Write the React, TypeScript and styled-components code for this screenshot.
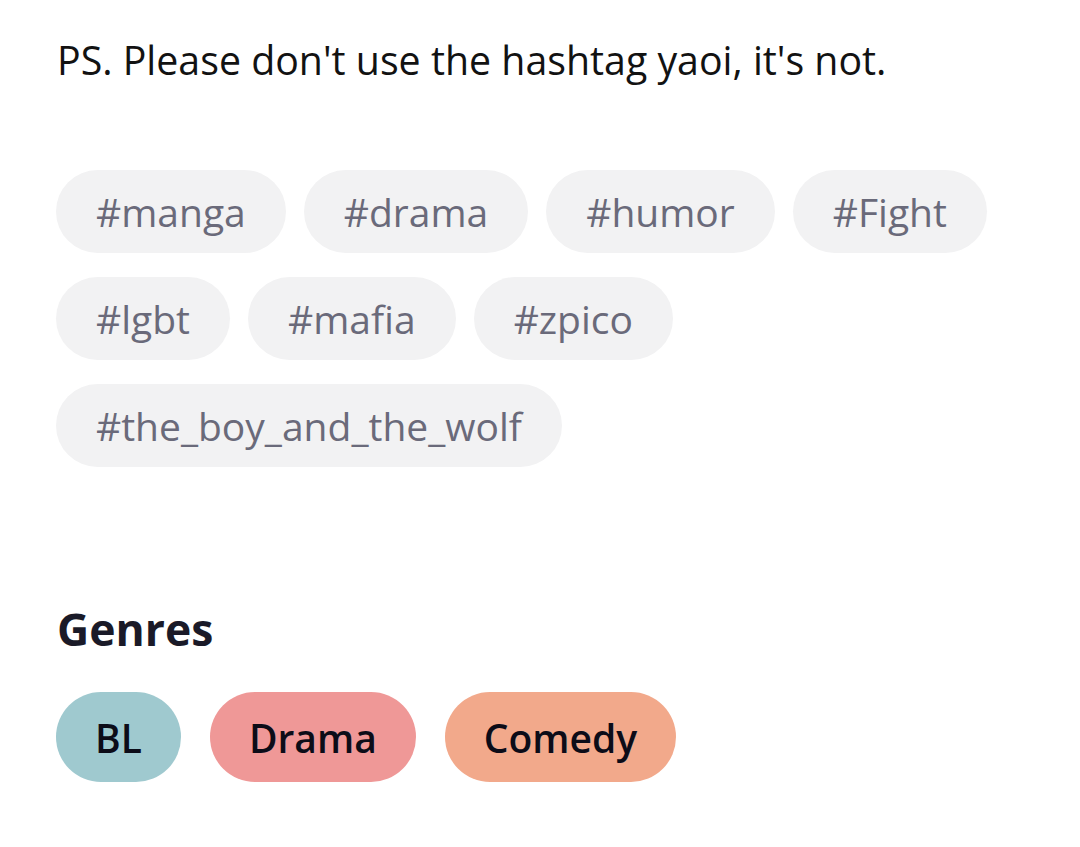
import styled, { createGlobalStyle } from "styled-components";

const Global = createGlobalStyle`
  html, body {
    margin: 0;
    padding: 0;
    background: #ffffff;
  }
  body {
    font-family: "Open Sans", "Noto Sans", sans-serif;
  }
`;

const Page = styled.main`
  width: 1080px;
  padding: 36px 57px 0;
  box-sizing: border-box;
`;

const Note = styled.p`
  margin: 0;
  font-size: 39.3px;
  line-height: 48px;
  color: #121212;
`;

const TagList = styled.div`
  display: flex;
  flex-wrap: wrap;
  gap: 24px 18px;
  margin-top: 86px;
  margin-left: -1px;
  width: 960px;
`;

const Tag = styled.span`
  height: 83px;
  padding: 0 40px;
  border-radius: 42px;
  background: #f2f2f3;
  color: #6a6a7a;
  font-size: 39px;
  display: flex;
  align-items: center;
`;

const Heading = styled.h2`
  margin: 136px 0 0;
  font-size: 44.5px;
  font-weight: 700;
  line-height: 52px;
  color: #1a1a28;
`;

const GenreList = styled.div`
  display: flex;
  gap: 29px;
  margin-top: 37px;
  margin-left: -1px;
`;

const Genre = styled.span<{ $bg: string }>`
  height: 90px;
  padding: 0 39px;
  border-radius: 45px;
  background: ${(p) => p.$bg};
  color: #0c0c18;
  font-size: 39px;
  font-weight: 600;
  display: flex;
  align-items: center;
`;

const tags = ["manga", "drama", "humor", "Fight", "lgbt", "mafia", "zpico", "the_boy_and_the_wolf"];

const genres = [
  { name: "BL", bg: "#9fc9cf" },
  { name: "Drama", bg: "#ef9897" },
  { name: "Comedy", bg: "#f2a98b" },
];

export default function App() {
  return (
    <Page>
      <Global />
      <Note>PS. Please don't use the hashtag yaoi, it's not.</Note>
      <TagList>
        {tags.map((t) => (
          <Tag key={t}>#{t}</Tag>
        ))}
      </TagList>
      <Heading>Genres</Heading>
      <GenreList>
        {genres.map((g) => (
          <Genre key={g.name} $bg={g.bg}>
            {g.name}
          </Genre>
        ))}
      </GenreList>
    </Page>
  );
}
